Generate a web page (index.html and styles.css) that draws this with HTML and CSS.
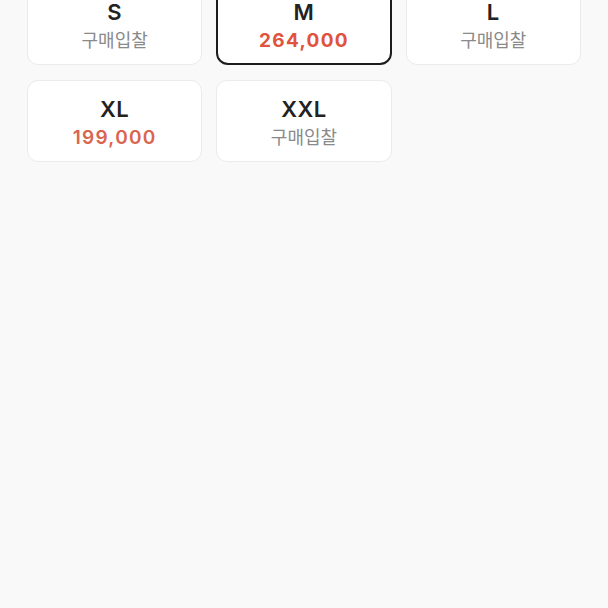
FILE: index.html
```html
<!DOCTYPE html>
<html>
<head>
    <meta http-equiv="Content-Type" content="text/html; charset=utf-8" />
    <title>사이즈 선택</title>
    <link rel="stylesheet" href="styles.css">
</head>
<body>
<div class="sizes">
    <!--사이즈 목록-->
    <div class="size">
        <div class="name">S</div>
        <div class="bid">구매입찰</div>
    </div>
    <div class="size current">
        <div class="name">M</div>
        <div class="price">264,000</div>
    </div>
    <div class="size">
        <div class="name">L</div>
        <div class="bid">구매입찰</div>
    </div>
    <div class="size">
        <div class="name">XL</div>
        <div class="price light">199,000</div>
    </div>
    <div class="size">
        <div class="name">XXL</div>
        <div class="bid">구매입찰</div>
    </div>
</div>
</body>
</html>
```

FILE: styles.css
```css
body {
    margin:0;
    background-color:#f9f9f9;
    font-family:Inter, "Noto Sans", "Noto Sans CJK KR", sans-serif;
}
.sizes {
    display:grid;
    grid-template-columns:repeat(3, 1fr);
    column-gap:14px;
    row-gap:15px;
    padding:0 27px;
    margin-top:-17px;
}
.size {
    height:82px;
    box-sizing:border-box;
    background:#fff;
    border:1px solid #ebebeb;
    border-radius:11px;
    display:flex;
    flex-direction:column;
    align-items:center;
    padding-top:15px;
}
.size.current {
    border:2px solid #1c1c1c;
    border-radius:12px;
    padding-top:14px;
}
.size .name {
    font-size:22px;
    font-weight:600;
    color:#222;
    line-height:26px;
    letter-spacing:0.5px;
}
.size .bid {
    font-size:18px;
    color:#8a8a8a;
    line-height:26px;
    margin-top:3px;
}
.size .price {
    font-size:19px;
    font-weight:700;
    color:#e0533e;
    line-height:26px;
    margin-top:3px;
    letter-spacing:1.3px;
}
.size .price.light {
    font-weight:600;
    color:#d9654f;
}
```
